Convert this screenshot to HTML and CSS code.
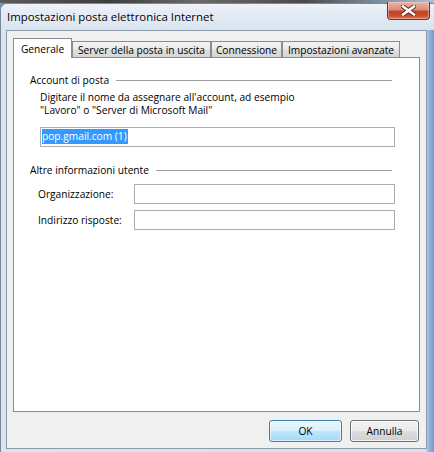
FILE: index.html
```html
<!DOCTYPE html>
<html lang="it">
<head>
<meta charset="utf-8">
<title>Impostazioni posta elettronica Internet</title>
<link rel="stylesheet" href="styles.css">
</head>
<body>
<div class="backdrop"></div>
<div class="window">
  <div class="titlebar">
    <span class="title">Impostazioni posta elettronica Internet</span>
    <div class="close" aria-label="Chiudi">
      <svg width="15" height="11" viewBox="0 0 15 11">
        <path d="M2 1.5 L13 9.5 M13 1.5 L2 9.5" stroke="#6b2418" stroke-width="4.4" stroke-linecap="square" fill="none"/>
        <path d="M2 1.5 L13 9.5 M13 1.5 L2 9.5" stroke="#ffffff" stroke-width="2.6" stroke-linecap="square" fill="none"/>
      </svg>
    </div>
  </div>
  <div class="frame-body">
    <div class="client">
      <div class="tabs">
        <div class="tab tab-active tab-generale">Generale</div>
        <div class="tab tab-server">Server della posta in uscita</div>
        <div class="tab tab-conn">Connessione</div>
        <div class="tab tab-adv">Impostazioni avanzate</div>
      </div>
      <div class="panel">
        <div class="group-title"><span>Account di posta</span><span class="rule"></span></div>
        <div class="group-body">
          <p class="desc">Digitare il nome da assegnare all'account, ad esempio<br>"Lavoro" o "Server di Microsoft Mail"</p>
          <div class="textbox textbox-wide"><span class="sel">pop.gmail.com (1)</span></div>
        </div>
        <div class="group-title group-title-2"><span>Altre informazioni utente</span><span class="rule"></span></div>
        <div class="form-row form-row-first"><span class="label">Organizzazione:</span><div class="textbox"></div></div>
        <div class="form-row"><span class="label">Indirizzo risposte:</span><div class="textbox"></div></div>
      </div>
      <div class="buttons">
        <div class="btn btn-default btn-ok">OK</div>
        <div class="btn btn-cancel">Annulla</div>
      </div>
    </div>
  </div>
</div>
</body>
</html>
```

FILE: styles.css
```css
* { box-sizing: border-box; }

html, body {
  margin: 0;
  padding: 0;
}

body {
  width: 434px;
  height: 452px;
  overflow: hidden;
  background: #6d97c9;
  font-family: "Open Sans", "Liberation Sans", Arial, sans-serif;
  font-size: 10.2px;
  color: #000;
}

.backdrop {
  height: 3px;
  background: linear-gradient(90deg, #5a5a5a 0%, #3e3e3e 25%, #6a6a6a 45%, #4a4a4a 70%, #a6c0df 100%);
}

.window {
  height: 449px;
  display: flex;
  flex-direction: column;
  border-top: 1px solid #7a8797;
  border-left: 1px solid #7a8797;
  border-top-left-radius: 7px;
  background: #dfe8f3;
}

.titlebar {
  height: 26px;
  display: flex;
  align-items: flex-start;
  justify-content: space-between;
  background: linear-gradient(180deg, #eef3f9 0%, #e2eaf4 40%, #dae4f0 100%);
  border-top-left-radius: 6px;
}

.title {
  font-size: 11.4px;
  line-height: 26px;
  padding-left: 6px;
  color: #000;
  text-shadow: 0 0 6px rgba(255, 255, 255, 0.95);
}

.close {
  width: 43px;
  height: 18px;
  margin-top: -2px;
  margin-right: 4px;
  display: flex;
  align-items: center;
  justify-content: center;
  border: 1px solid #7c2b1e;
  border-top: none;
  border-radius: 0 0 4px 4px;
  background: linear-gradient(180deg, #e9b4a6 0%, #d98d78 45%, #c2452c 55%, #cf4a2d 80%, #e07a55 100%);
  box-shadow: inset 0 0 0 1px rgba(255, 220, 210, 0.45);
}

.frame-body {
  flex: 1;
  display: flex;
  flex-direction: column;
  padding: 0 7px 3px 5px;
  background: linear-gradient(90deg, #dbe5f1 0, #d7e2ef calc(100% - 8px), #9dbbe0 calc(100% - 6px), #6f9bd2 100%);
}

.client {
  flex: 1;
  display: flex;
  flex-direction: column;
  border: 1px solid #8e9aa8;
  background: #f0f0f0;
  padding: 7px 6px 6px 6px;
}

/* Tabs */
.tabs {
  height: 19px;
  display: flex;
  align-items: flex-end;
}

.tab {
  height: 16px;
  display: flex;
  align-items: center;
  justify-content: center;
  border: 1px solid #898c95;
  border-bottom: none;
  background: linear-gradient(180deg, #f3f3f3 0%, #ebebeb 45%, #dddddd 55%, #d6d6d6 100%);
  white-space: nowrap;
  line-height: 14px;
}

.tab-active {
  position: relative;
  z-index: 1;
  height: 20px;
  margin-bottom: -1px;
  background: #ffffff;
}

.tab-generale { width: 59px; }
.tab-server { width: 139px; }
.tab-conn { width: 71px; }
.tab-adv { width: 118px; }

/* Panel */
.panel {
  flex: 1;
  border: 1px solid #898c95;
  background: #ffffff;
  padding: 0 24px 0 16px;
}

.group-title {
  display: flex;
  align-items: center;
  height: 13px;
  line-height: 13px;
  margin-top: 16px;
}

.group-title-2 {
  margin-top: 17px;
}

.rule {
  flex: 1;
  height: 1px;
  margin-left: 7px;
  margin-right: 3px;
  background: #a0a0a0;
}

.group-body {
  padding-left: 10px;
}

.desc {
  margin: 4px 0 0 0;
  line-height: 13px;
}

.textbox {
  height: 20px;
  border: 1px solid #abadb3;
  background: #ffffff;
}

.textbox-wide {
  margin-top: 10px;
  padding: 1px 1px;
}

.sel {
  display: inline-block;
  height: 15px;
  line-height: 15px;
  background: #3399ff;
  color: #ffffff;
  padding: 0 1px 0 0;
}

.form-row {
  display: flex;
  align-items: center;
  margin-top: 6px;
  padding-left: 8px;
}

.form-row-first {
  margin-top: 7px;
}

.label {
  width: 96px;
  line-height: 13px;
}

.form-row .textbox {
  flex: 1;
}

/* Buttons */
.buttons {
  display: flex;
  justify-content: flex-end;
  gap: 8px;
  margin-top: 8px;
  padding-right: 1px;
}

.btn {
  height: 22px;
  display: flex;
  align-items: center;
  justify-content: center;
  border: 1px solid #707070;
  border-radius: 3px;
  background: linear-gradient(180deg, #f2f2f2 0%, #ebebeb 48%, #dddddd 52%, #cfcfcf 100%);
  box-shadow: inset 0 0 0 1px rgba(255, 255, 255, 0.75);
}

.btn-default {
  border-color: #3c7fb1;
  background: linear-gradient(180deg, #eaf6fd 0%, #d9f0fc 48%, #bee6fd 52%, #a7d9f5 100%);
  box-shadow: inset 0 0 0 1px rgba(255, 255, 255, 0.6);
}

.btn-ok { width: 73px; }
.btn-cancel { width: 69px; }
```
